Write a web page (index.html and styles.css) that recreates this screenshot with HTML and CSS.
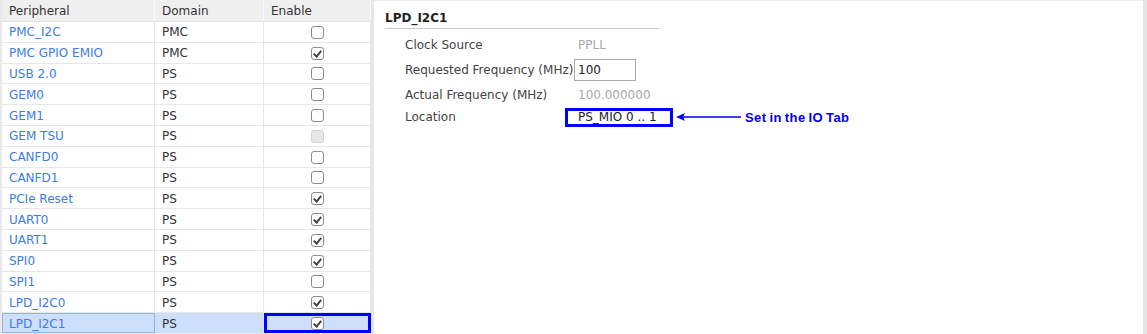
FILE: index.html
```html
<!DOCTYPE html>
<html lang="en">
<head>
    <meta charset="UTF-8">
    <title>PS PMC Peripherals</title>
    <link rel="stylesheet" href="styles.css">
</head>
<body>
    <div class="app">
        <div class="periph">
            <div class="row head">
                <div class="cell">Peripheral</div>
                <div class="cell">Domain</div>
                <div class="cell">Enable</div>
            </div>
            <div class="row"><div class="cell link">PMC_I2C</div><div class="cell">PMC</div><div class="cell chk"><span class="box"></span></div></div>
            <div class="row"><div class="cell link">PMC GPIO EMIO</div><div class="cell">PMC</div><div class="cell chk"><span class="box on"></span></div></div>
            <div class="row"><div class="cell link">USB 2.0</div><div class="cell">PS</div><div class="cell chk"><span class="box"></span></div></div>
            <div class="row"><div class="cell link">GEM0</div><div class="cell">PS</div><div class="cell chk"><span class="box"></span></div></div>
            <div class="row"><div class="cell link">GEM1</div><div class="cell">PS</div><div class="cell chk"><span class="box"></span></div></div>
            <div class="row"><div class="cell link">GEM TSU</div><div class="cell">PS</div><div class="cell chk"><span class="box off"></span></div></div>
            <div class="row"><div class="cell link">CANFD0</div><div class="cell">PS</div><div class="cell chk"><span class="box"></span></div></div>
            <div class="row"><div class="cell link">CANFD1</div><div class="cell">PS</div><div class="cell chk"><span class="box"></span></div></div>
            <div class="row"><div class="cell link">PCIe Reset</div><div class="cell">PS</div><div class="cell chk"><span class="box on"></span></div></div>
            <div class="row"><div class="cell link">UART0</div><div class="cell">PS</div><div class="cell chk"><span class="box on"></span></div></div>
            <div class="row"><div class="cell link">UART1</div><div class="cell">PS</div><div class="cell chk"><span class="box on"></span></div></div>
            <div class="row"><div class="cell link">SPI0</div><div class="cell">PS</div><div class="cell chk"><span class="box on"></span></div></div>
            <div class="row"><div class="cell link">SPI1</div><div class="cell">PS</div><div class="cell chk"><span class="box"></span></div></div>
            <div class="row"><div class="cell link">LPD_I2C0</div><div class="cell">PS</div><div class="cell chk"><span class="box on"></span></div></div>
            <div class="row selected"><div class="cell link focus">LPD_I2C1</div><div class="cell">PS</div><div class="cell chk marked"><span class="box on"></span></div></div>
        </div>

        <div class="splitter"></div>

        <div class="detail">
            <div class="detail-title">LPD_I2C1</div>
            <div class="props">
                <div class="prop-label">Clock Source</div>
                <div class="prop-value muted">PPLL</div>

                <div class="prop-label">Requested Frequency (MHz)</div>
                <div class="prop-value"><span class="field">100</span></div>

                <div class="prop-label">Actual Frequency (MHz)</div>
                <div class="prop-value muted">100.000000</div>

                <div class="prop-label">Location</div>
                <div class="prop-value">
                    <span class="annot-box">PS_MIO 0 .. 1</span>
                    <svg class="arrow" width="66" height="10" viewBox="0 0 66 10">
                        <line x1="8" y1="5" x2="66" y2="5" stroke="#0000ff" stroke-width="1.5"/>
                        <polygon points="1,5 10,1 8,5 10,9" fill="#0000ff"/>
                    </svg>
                    <span class="annot-text">Set in the IO Tab</span>
                </div>
            </div>
        </div>

        <div class="edge"></div>
    </div>
</body>
</html>
```

FILE: styles.css
```css
* {
    margin: 0;
    padding: 0;
    box-sizing: border-box;
}

body {
    font-family: "DejaVu Sans", "Liberation Sans", sans-serif;
    font-size: 12px;
    color: #333;
    background: #fff;
}

.app {
    display: flex;
    width: 1147px;
    height: 334px;
    overflow: hidden;
}

/* peripheral table */
.periph {
    width: 371px;
    border-left: 2px solid #e9e9e9;
}

.row {
    display: grid;
    grid-template-columns: 153px 109px 107px;
    height: 20.8px;
    border-bottom: 1px solid #e8e8e8;
}

.row.head {
    height: 22px;
    background: #efefef;
    border-bottom: 1px solid #e4e4e4;
}

.cell {
    display: flex;
    align-items: center;
    padding-left: 7px;
    padding-top: 1px;
    border-right: 1px solid #e8e8e8;
    white-space: nowrap;
}

.head .cell {
    border-right: 1px solid #f8f8f8;
}

.link {
    color: #3c7ce6;
}

.chk {
    justify-content: center;
    padding-left: 0;
}

.box {
    width: 13px;
    height: 13px;
    border: 1px solid #8c8c8c;
    border-radius: 3px;
    background: #fff;
    position: relative;
}

.box.off {
    background: #e8e8e8;
    border-color: #d2d2d2;
}

.box.on::after {
    content: "";
    position: absolute;
    left: 3px;
    top: 1px;
    width: 3px;
    height: 6px;
    border: solid #444;
    border-width: 0 2px 2px 0;
    transform: rotate(40deg);
}

.selected .cell {
    background: #cddffb;
}

.selected .focus {
    border: 1px solid #8db6e6;
    padding-left: 6px;
}

.selected .marked {
    border: 3px solid #0000ff;
}

.splitter {
    width: 3px;
    background: #e6e6e6;
}

.edge {
    width: 4px;
    background: #e6e6e6;
}

/* detail panel */
.detail {
    flex: 1;
    padding-left: 11px;
    border-top: 1px solid #eeeeee;
}

.detail-title {
    width: 274px;
    margin-top: 10px;
    padding-bottom: 2px;
    line-height: 15px;
    font-weight: bold;
    color: #222;
    border-bottom: 1px solid #c8c8c8;
}

.props {
    display: grid;
    grid-template-columns: 169px auto;
    grid-template-rows: 20px 30px 20px 24px;
    align-items: center;
    margin-top: 6px;
    padding-left: 20px;
}

.prop-label {
    color: #444;
}

.prop-value {
    display: flex;
    align-items: center;
    padding-left: 4px;
}

.muted {
    color: #a8a8a8;
}

.field {
    width: 62px;
    height: 22px;
    margin-left: -4px;
    padding-left: 3px;
    border: 1px solid #a9a9a9;
    line-height: 20px;
    color: #222;
}

.annot-box {
    width: 108px;
    height: 19px;
    margin-left: -13px;
    padding-left: 10px;
    border: 3px solid #0000ff;
    line-height: 13px;
    color: #222;
}

.arrow {
    margin-left: 2px;
}

.annot-text {
    margin-left: 4px;
    font-family: "Liberation Sans", Arial, sans-serif;
    font-weight: bold;
    font-size: 13px;
    color: #0000ff;
    letter-spacing: 0.4px;
    word-spacing: -1px;
}
```
